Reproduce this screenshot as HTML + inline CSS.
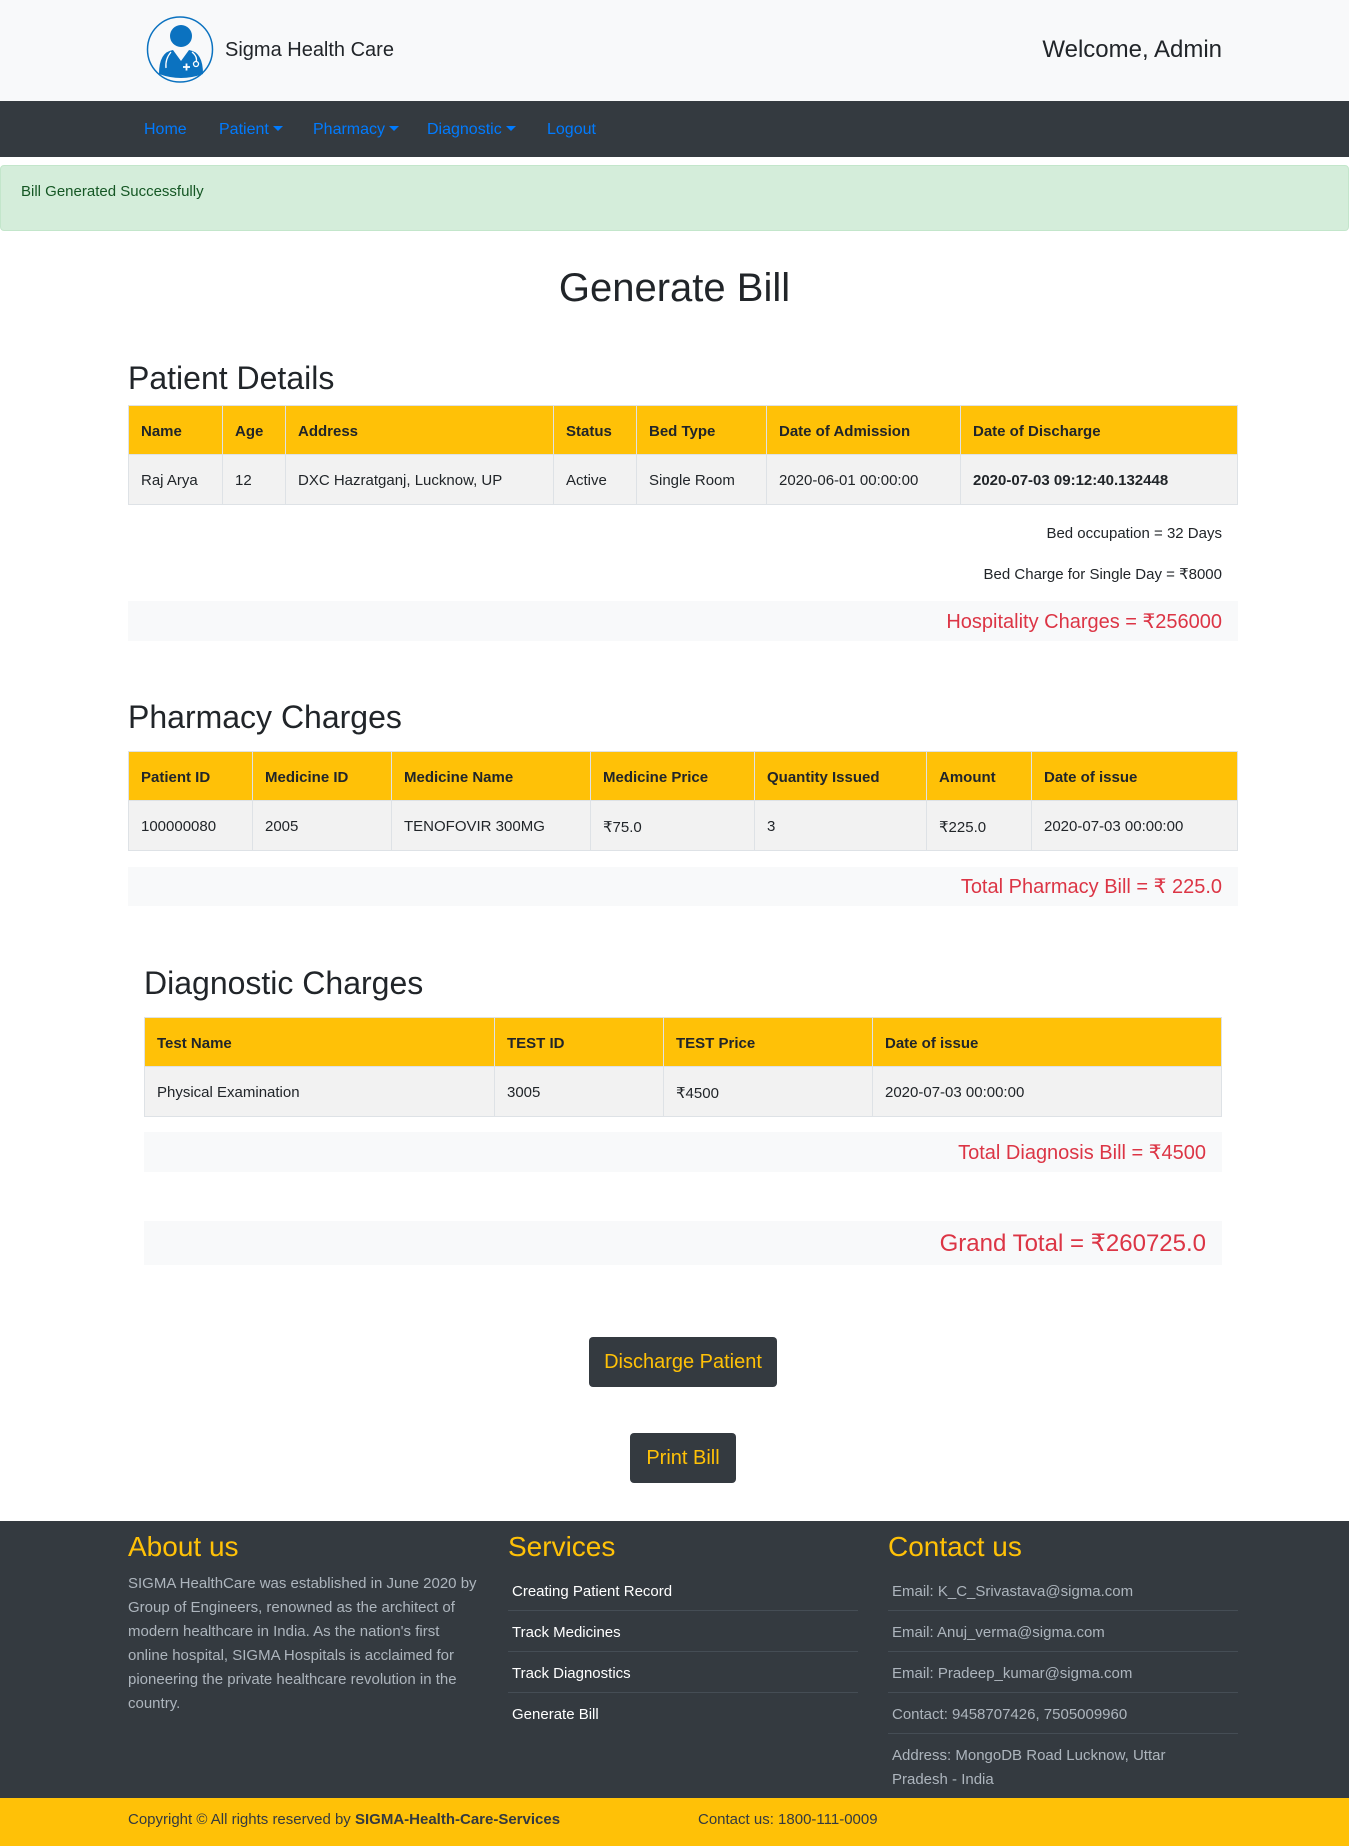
<!DOCTYPE html>
<html><head><meta charset="utf-8">
<style>
*{box-sizing:border-box;margin:0;padding:0}
body{width:1349px;height:1846px;position:relative;font-family:"Liberation Sans",sans-serif;background:#fff;color:#212529;overflow:hidden}
.a{position:absolute}
.hdr{left:0;top:0;width:1349px;height:101px;background:#f8f9fa}
.nav{left:0;top:101px;width:1349px;height:56px;background:#343a40}
.nav span{position:absolute;top:20px;color:#007bff;font-size:16px}
.caret{display:inline-block;width:0;height:0;border-left:5px solid transparent;border-right:5px solid transparent;border-top:5px solid #007bff;vertical-align:3px;margin-left:4px}
.alert{left:0;top:165px;width:1349px;height:66px;background:#d4edda;border:1px solid #c3e6cb;border-radius:4px;color:#155724;font-size:15px;padding:17px 20px}
table{position:absolute;border-collapse:collapse;font-size:15px}
td,th{border:1px solid #dee2e6;padding:0 12px;text-align:left;vertical-align:middle}
th{background:#ffc107;height:49px;font-weight:bold;padding-top:2px}
td{background:#f2f2f2;height:50px;padding-top:2px}
h2{position:absolute;font-size:32px;font-weight:500;left:128px}
.bar{position:absolute;background:#f8f9fa;color:#dc3545;font-size:20px;text-align:right;padding-right:16px}
.rt{position:absolute;right:127px;font-size:15px;text-align:right}
.btn{position:absolute;background:#343a40;color:#ffc107;font-size:20px;border-radius:4px;text-align:center;line-height:48px}
.ft{left:0;top:1521px;width:1349px;height:277px;background:#343a40}
.fy{left:0;top:1798px;width:1349px;height:48px;background:#ffc107;font-size:15px;color:#343a40}
.fh{position:absolute;top:1531px;font-size:28px;color:#ffc107;font-weight:500}
.li{position:absolute;width:350px;height:41px;line-height:43px;font-size:15px;padding-left:4px;border-bottom:1px solid #454d55}
</style></head><body>
<div class="a hdr"></div>
<svg class="a" style="left:146px;top:15px" width="70" height="70" viewBox="0 0 70 70">
<circle cx="34" cy="34.5" r="32.5" fill="none" stroke="#0b72c0" stroke-width="1.5"/>
<circle cx="35" cy="21" r="11" fill="#0b72c0"/>
<path d="M13 59 Q13 37 27 35 L35 46 L43 35 Q57 37 57 59 Q35 67 13 59Z" fill="#0b72c0"/>
<path d="M25 37 Q19 44 20 53 M46 37 Q52 42 50 47" stroke="#fff" stroke-width="1.3" fill="none"/>
<circle cx="50" cy="49" r="2.5" fill="none" stroke="#fff" stroke-width="1.3"/>
<path d="M37 52h7M40.5 48.5v7" stroke="#fff" stroke-width="1.8"/>
</svg>
<div class="a" style="left:225px;top:39px;font-size:20px;color:#212529">Sigma Health Care</div>
<div class="a" style="right:127px;top:36px;font-size:24px;font-weight:500">Welcome, Admin</div>
<div class="a nav">
<span style="left:144px">Home</span>
<span style="left:219px">Patient<i class="caret"></i></span>
<span style="left:313px">Pharmacy<i class="caret"></i></span>
<span style="left:427px">Diagnostic<i class="caret"></i></span>
<span style="left:547px">Logout</span>
</div>
<div class="a alert">Bill Generated Successfully</div>
<div class="a" style="left:0;width:1349px;top:266px;text-align:center;font-size:40px;font-weight:500">Generate Bill</div>

<h2 style="top:360px">Patient Details</h2>
<table style="left:128px;top:405px;width:1110px">
<tr><th style="width:94px">Name</th><th style="width:63px">Age</th><th style="width:268px">Address</th><th style="width:83px">Status</th><th style="width:130px">Bed Type</th><th style="width:194px">Date of Admission</th><th>Date of Discharge</th></tr>
<tr><td>Raj Arya</td><td>12</td><td>DXC Hazratganj, Lucknow, UP</td><td>Active</td><td>Single Room</td><td>2020-06-01 00:00:00</td><td style="font-weight:bold">2020-07-03 09:12:40.132448</td></tr>
</table>
<div class="rt" style="top:525px">Bed occupation = 32 Days</div>
<div class="rt" style="top:565px">Bed Charge for Single Day = ₹8000</div>
<div class="bar" style="left:128px;top:601px;width:1110px;height:40px;line-height:42px">Hospitality Charges = ₹256000</div>

<h2 style="top:699px">Pharmacy Charges</h2>
<table style="left:128px;top:751px;width:1110px">
<tr><th style="width:124px">Patient ID</th><th style="width:139px">Medicine ID</th><th style="width:199px">Medicine Name</th><th style="width:164px">Medicine Price</th><th style="width:172px">Quantity Issued</th><th style="width:105px">Amount</th><th>Date of issue</th></tr>
<tr><td>100000080</td><td>2005</td><td>TENOFOVIR 300MG</td><td>₹75.0</td><td>3</td><td>₹225.0</td><td>2020-07-03 00:00:00</td></tr>
</table>
<div class="bar" style="left:128px;top:867px;width:1110px;height:39px;line-height:41px">Total Pharmacy Bill = ₹ 225.0</div>

<h2 style="top:965px;left:144px">Diagnostic Charges</h2>
<table style="left:144px;top:1017px;width:1078px">
<tr><th style="width:350px">Test Name</th><th style="width:169px">TEST ID</th><th style="width:209px">TEST Price</th><th>Date of issue</th></tr>
<tr><td>Physical Examination</td><td>3005</td><td>₹4500</td><td>2020-07-03 00:00:00</td></tr>
</table>
<div class="bar" style="left:144px;top:1132px;width:1078px;height:40px;line-height:42px">Total Diagnosis Bill = ₹4500</div>
<div class="bar" style="left:144px;top:1221px;width:1078px;height:44px;line-height:46px;font-size:24px">Grand Total = ₹260725.0</div>

<div class="btn" style="left:589px;top:1337px;width:188px;line-height:50px">Discharge Patient</div>
<div class="btn" style="left:630px;top:1433px;width:106px;line-height:50px">Print Bill</div>

<div class="a ft"></div>
<div class="fh" style="left:128px">About us</div>
<div class="fh" style="left:508px">Services</div>
<div class="fh" style="left:888px">Contact us</div>
<div class="a" style="left:128px;top:1572px;width:352px;font-size:15px;line-height:24px;color:#adb5bd">SIGMA HealthCare was established in June 2020 by Group of Engineers, renowned as the architect of modern healthcare in India. As the nation's first online hospital, SIGMA Hospitals is acclaimed for pioneering the private healthcare revolution in the country.</div>
<div class="li" style="left:508px;top:1570px;color:#fff">Creating Patient Record</div>
<div class="li" style="left:508px;top:1611px;color:#fff">Track Medicines</div>
<div class="li" style="left:508px;top:1652px;color:#fff">Track Diagnostics</div>
<div class="li" style="left:508px;top:1693px;color:#fff;border:none">Generate Bill</div>
<div class="li" style="left:888px;top:1570px;color:#adb5bd">Email: K_C_Srivastava@sigma.com</div>
<div class="li" style="left:888px;top:1611px;color:#adb5bd">Email: Anuj_verma@sigma.com</div>
<div class="li" style="left:888px;top:1652px;color:#adb5bd">Email: Pradeep_kumar@sigma.com</div>
<div class="li" style="left:888px;top:1693px;color:#adb5bd">Contact: 9458707426, 7505009960</div>
<div class="a" style="left:892px;top:1744px;width:320px;font-size:15px;line-height:24px;color:#adb5bd">Address: MongoDB Road Lucknow, Uttar Pradesh - India</div>
<div class="a fy">
<div class="a" style="left:128px;top:13px">Copyright © All rights reserved by <b>SIGMA-Health-Care-Services</b></div>
<div class="a" style="left:698px;top:13px">Contact us: 1800-111-0009</div>
</div>
</body></html>
